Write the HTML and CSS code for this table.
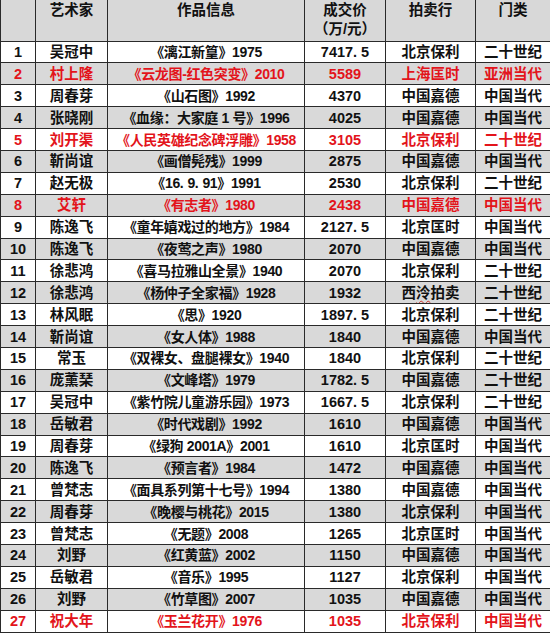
FILE: index.html
```html
<!DOCTYPE html>
<html lang="zh-CN">
<head>
<meta charset="utf-8">
<title>成交价排行</title>
<link rel="stylesheet" href="styles.css">
</head>
<body>
<table class="rank">
  <colgroup>
    <col class="c-no"><col class="c-artist"><col class="c-work"><col class="c-price"><col class="c-house"><col class="c-cat">
  </colgroup>
  <thead>
    <tr><th></th><th>艺术家</th><th>作品信息</th><th>成交价<br>（万/元）</th><th>拍卖行</th><th>门类</th></tr>
  </thead>
  <tbody>
    <tr><td>1</td><td>吴冠中</td><td class="work">《漓江新篁》1975</td><td>7417<span class="dot">.</span>5</td><td>北京保利</td><td>二十世纪</td></tr>
    <tr class="hot"><td>2</td><td>村上隆</td><td class="work">《云龙图-红色突变》2010</td><td>5589</td><td>上海匡时</td><td>亚洲当代</td></tr>
    <tr><td>3</td><td>周春芽</td><td class="work">《山石图》1992</td><td>4370</td><td>中国嘉德</td><td>中国当代</td></tr>
    <tr><td>4</td><td>张晓刚</td><td class="work">《血缘：大家庭 1 号》1996</td><td>4025</td><td>中国嘉德</td><td>中国当代</td></tr>
    <tr class="hot"><td>5</td><td>刘开渠</td><td class="work">《人民英雄纪念碑浮雕》1958</td><td>3105</td><td>北京保利</td><td>二十世纪</td></tr>
    <tr><td>6</td><td>靳尚谊</td><td class="work">《画僧髡残》1999</td><td>2875</td><td>中国嘉德</td><td>中国当代</td></tr>
    <tr><td>7</td><td>赵无极</td><td class="work">《16<span class="dot">.</span>9<span class="dot">.</span>91》1991</td><td>2530</td><td>北京保利</td><td>二十世纪</td></tr>
    <tr class="hot"><td>8</td><td>艾轩</td><td class="work">《有志者》1980</td><td>2438</td><td>中国嘉德</td><td>中国当代</td></tr>
    <tr><td>9</td><td>陈逸飞</td><td class="work">《童年嬉戏过的地方》1984</td><td>2127<span class="dot">.</span>5</td><td>北京匡时</td><td>中国当代</td></tr>
    <tr><td>10</td><td>陈逸飞</td><td class="work">《夜莺之声》1980</td><td>2070</td><td>中国嘉德</td><td>中国当代</td></tr>
    <tr><td>11</td><td>徐悲鸿</td><td class="work">《喜马拉雅山全景》1940</td><td>2070</td><td>北京保利</td><td>二十世纪</td></tr>
    <tr><td>12</td><td>徐悲鸿</td><td class="work">《杨仲子全家福》1928</td><td>1932</td><td>西<span class="typo">泠</span>拍卖</td><td>二十世纪</td></tr>
    <tr><td>13</td><td>林风眠</td><td class="work">《思》1920</td><td>1897<span class="dot">.</span>5</td><td>北京保利</td><td>二十世纪</td></tr>
    <tr><td>14</td><td>靳尚谊</td><td class="work">《女人体》1988</td><td>1840</td><td>中国嘉德</td><td>中国当代</td></tr>
    <tr><td>15</td><td>常玉</td><td class="work">《双裸女、盘腿裸女》1940</td><td>1840</td><td>北京保利</td><td>二十世纪</td></tr>
    <tr><td>16</td><td>庞薰琹</td><td class="work">《文峰塔》1979</td><td>1782<span class="dot">.</span>5</td><td>中国嘉德</td><td>二十世纪</td></tr>
    <tr><td>17</td><td>吴冠中</td><td class="work">《紫竹院儿童游乐园》1973</td><td>1667<span class="dot">.</span>5</td><td>北京保利</td><td>二十世纪</td></tr>
    <tr><td>18</td><td>岳敏君</td><td class="work">《时代戏剧》1992</td><td>1610</td><td>中国嘉德</td><td>中国当代</td></tr>
    <tr><td>19</td><td>周春芽</td><td class="work">《绿狗 2001A》2001</td><td>1610</td><td>北京匡时</td><td>中国当代</td></tr>
    <tr><td>20</td><td>陈逸飞</td><td class="work">《预言者》1984</td><td>1472</td><td>中国嘉德</td><td>中国当代</td></tr>
    <tr><td>21</td><td>曾梵志</td><td class="work">《面具系列第十七号》1994</td><td>1380</td><td>中国嘉德</td><td>中国当代</td></tr>
    <tr><td>22</td><td>周春芽</td><td class="work">《晚樱与桃花》2015</td><td>1380</td><td>北京保利</td><td>中国当代</td></tr>
    <tr><td>23</td><td>曾梵志</td><td class="work">《无题》2008</td><td>1265</td><td>北京匡时</td><td>中国当代</td></tr>
    <tr><td>24</td><td>刘野</td><td class="work">《红黄蓝》2002</td><td>1150</td><td>中国嘉德</td><td>中国当代</td></tr>
    <tr><td>25</td><td>岳敏君</td><td class="work">《音乐》1995</td><td>1127</td><td>北京保利</td><td>中国当代</td></tr>
    <tr><td>26</td><td>刘野</td><td class="work">《竹草图》2007</td><td>1035</td><td>中国嘉德</td><td>中国当代</td></tr>
    <tr class="hot"><td>27</td><td>祝大年</td><td class="work">《玉兰花开》1976</td><td>1035</td><td>北京保利</td><td>中国当代</td></tr>
  </tbody>
</table>
</body>
</html>
```
FILE: styles.css
```css
html, body {
  margin: 0;
  padding: 0;
  background: #ffffff;
}

.rank {
  border-collapse: collapse;
  table-layout: fixed;
  width: 550px;
  font-family: "Liberation Sans", "Noto Sans CJK SC", sans-serif;
  font-weight: 700;
  font-size: 14.5px;
  color: #111111;
}

.c-no { width: 35px; }
.c-artist { width: 72px; }
.c-work { width: 197px; }
.c-price { width: 81px; }
.c-house { width: 90px; }
.c-cat { width: 75px; }

.rank th,
.rank td {
  border: 1px solid #2a2a2a;
  text-align: center;
  padding: 0;
  white-space: nowrap;
  overflow: hidden;
}

.rank thead tr {
  height: 41px;
}

.rank th {
  border-top: none;
  background: #d8d8d8;
  vertical-align: top;
  line-height: 19px;
  padding-top: 1px;
  font-weight: 700;
}

.rank tbody tr {
  height: 21.9px;
}

.rank td {
  line-height: 18px;
  vertical-align: middle;
}

.rank td.work {
  font-size: 14px;
  letter-spacing: -0.35px;
}

.rank tbody tr:nth-child(even) td {
  background: #d9d9d9;
}

.rank tr.hot td {
  color: #e3141b;
}

.dot {
  margin-right: 4px;
}

.typo {
  text-decoration: underline wavy #d0342c;
  text-decoration-thickness: 1px;
  text-underline-offset: 2px;
}
```
